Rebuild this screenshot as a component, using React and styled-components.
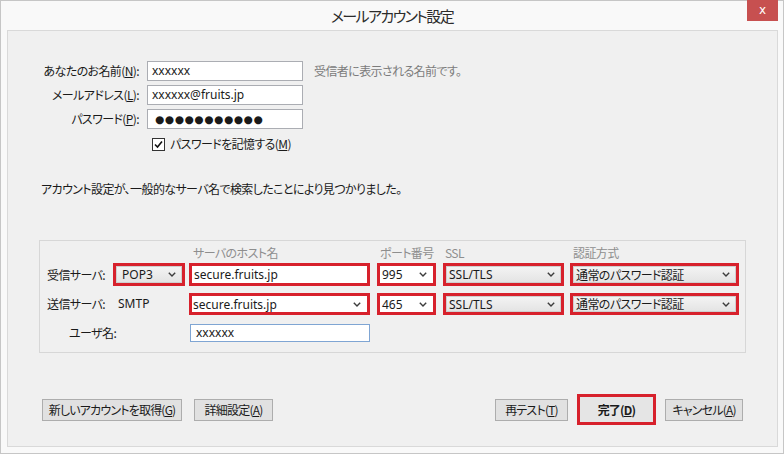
import React from "react";
import styled, { createGlobalStyle } from "styled-components";

const GlobalStyle = createGlobalStyle`
  body {
    margin: 0;
    background: #ffffff;
    font-family: "Noto Sans CJK JP", sans-serif;
    font-size: 12px;
    color: #1a1a1a;
    font-feature-settings: "palt" 1;
    letter-spacing: -0.6px;
  }
`;

const Window = styled.div`
  width: 784px;
  height: 454px;
  box-sizing: border-box;
  border: 1px solid #c6c6c6;
  background: #f9f9f9;
  display: flex;
  flex-direction: column;
`;

const TitleBar = styled.div`
  height: 29px;
  display: grid;
  grid-template-columns: 1fr auto 1fr;
  align-items: start;
`;

const Title = styled.div`
  grid-column: 2;
  font-size: 15px;
  line-height: 30px;
  letter-spacing: -1.6px;
  color: #2b2b2b;
`;

const CloseButton = styled.div`
  justify-self: end;
  margin-right: 5px;
  margin-top: -1px;
  width: 31px;
  height: 21px;
  background: #c75050;
  color: #ffffff;
  font-family: "DejaVu Sans", sans-serif;
  font-size: 12px;
  letter-spacing: 0;
  line-height: 20px;
  text-align: center;
`;

const Content = styled.div`
  flex: 1;
  margin: 0 5px 6px 6px;
  border: 1px solid #d9d9d9;
  background: #f0f0f0;
  display: flex;
  flex-direction: column;
`;

const FormGrid = styled.div`
  margin-top: 30px;
  display: grid;
  grid-template-columns: 131px 156px auto;
  grid-auto-rows: 20px;
  column-gap: 8px;
  row-gap: 4px;
  align-items: center;
`;

const Label = styled.div`
  text-align: right;
  line-height: 16px;
  white-space: nowrap;
`;

const TextInput = styled.div`
  height: 20px;
  box-sizing: border-box;
  border: 1px solid #abadb3;
  background: #ffffff;
  padding: 0 4px;
  font-family: "Noto Sans", "Noto Sans CJK JP", sans-serif;
  font-size: 12px;
  letter-spacing: 0;
  line-height: 18px;
  font-feature-settings: normal;
`;

const Dots = styled.span`
  font-family: "DejaVu Sans", sans-serif;
  font-size: 10.6px;
  letter-spacing: 0.6px;
  padding-left: 3px;
`;

const Hint = styled.div`
  margin-left: 3px;
  color: #7c7c7c;
  line-height: 16px;
  white-space: nowrap;
`;

const CheckRow = styled.div`
  grid-column: 2 / span 2;
  margin-top: 2px;
  padding-left: 5px;
  display: flex;
  align-items: center;
  gap: 5px;
  line-height: 16px;
`;

const CheckBox = styled.span`
  width: 13px;
  height: 13px;
  box-sizing: border-box;
  border: 1px solid #333333;
  background: #ffffff;
  display: flex;
  align-items: center;
  justify-content: center;
`;

const Message = styled.div`
  margin: 28px 0 0 33px;
  line-height: 16px;
`;

const GroupBox = styled.div`
  margin: 43px 0 0 31px;
  width: 707px;
  height: 113px;
  box-sizing: border-box;
  border: 1px solid #d7d7d7;
  padding: 4px 0 0 7px;
`;

const ServerGrid = styled.div`
  display: grid;
  grid-template-columns: 66px 76px 188px 66px 127px 169px;
  grid-template-rows: 18px 30px 31px 18px;
  align-items: start;
`;

const Header = styled.div`
  grid-column: ${(p) => p.$col};
  padding-left: ${(p) => p.$pl || 3}px;
  color: #8e8e8e;
  line-height: 16px;
  white-space: nowrap;
`;

const Cell = styled.div`
  grid-column: ${(p) => p.$col};
  height: ${(p) => p.$h}px;
  line-height: ${(p) => p.$h}px;
  padding-left: ${(p) => p.$pl || 0}px;
  white-space: nowrap;
  font-family: ${(p) => (p.$latin ? '"Noto Sans", "Noto Sans CJK JP", sans-serif' : "inherit")};
  letter-spacing: ${(p) => (p.$latin ? "0" : "inherit")};
`;

const RedBox = styled.div`
  grid-column: ${(p) => p.$col};
  width: ${(p) => p.$w}px;
  height: ${(p) => p.$h}px;
  box-sizing: border-box;
  border: 3px solid #d7212c;
  background: #ffffff;
`;

const Combo = styled.div`
  height: 100%;
  box-sizing: border-box;
  display: flex;
  align-items: center;
  justify-content: space-between;
  padding: 0 5px 0 ${(p) => p.$pl}px;
  border: 1px solid ${(p) => (p.$white ? "transparent" : "#cfcfcf")};
  background: ${(p) => (p.$white ? "#ffffff" : "linear-gradient(#f3f3f3, #e4e4e4)")};
  font-family: "Noto Sans", "Noto Sans CJK JP", sans-serif;
  font-size: 12px;
  letter-spacing: ${(p) => (p.$jp ? "-0.6px" : "0")};
  font-feature-settings: ${(p) => (p.$jp ? '"palt" 1' : "normal")};
`;

const UserInput = styled.div`
  grid-column: 3;
  width: 180px;
  height: 18px;
  margin-left: 1px;
  box-sizing: border-box;
  border: 1px solid #7fa5d3;
  background: #ffffff;
  padding-left: 5px;
  font-family: "Noto Sans", sans-serif;
  font-size: 12px;
  letter-spacing: 0;
  line-height: 15px;
`;

const ButtonRow = styled.div`
  margin: 41px 34px 0 34px;
  display: flex;
  align-items: center;
`;

const ButtonGroup = styled.div`
  display: flex;
  align-items: center;
  gap: ${(p) => p.$gap}px;
  margin-left: ${(p) => (p.$right ? "auto" : 0)};
`;

const Button = styled.div`
  width: ${(p) => p.$w}px;
  height: ${(p) => (p.$primary ? 31 : 22)}px;
  box-sizing: border-box;
  border: ${(p) => (p.$primary ? "3px solid #d7212c" : "1px solid #adadad")};
  background: ${(p) => (p.$primary ? "#e5e5e5" : "#e1e1e1")};
  display: flex;
  align-items: center;
  justify-content: center;
  white-space: nowrap;
  letter-spacing: -0.8px;
  font-weight: ${(p) => (p.$primary ? 700 : 400)};
  line-height: 16px;
`;

const Chevron = () => (
  <svg width="8" height="5" viewBox="0 0 8 5">
    <polyline points="0.8,0.8 4,4 7.2,0.8" fill="none" stroke="#3c3c3c" strokeWidth="1.4" />
  </svg>
);

const Check = () => (
  <svg width="9" height="9" viewBox="0 0 9 9">
    <polyline points="1,4.5 3.5,7 8,1.5" fill="none" stroke="#111" strokeWidth="1.6" />
  </svg>
);

const App = () => (
  <>
    <GlobalStyle />
    <Window>
      <TitleBar>
        <Title>メールアカウント設定</Title>
        <CloseButton>x</CloseButton>
      </TitleBar>
      <Content>
        <FormGrid>
          <Label>あなたのお名前(<u>N</u>):</Label>
          <TextInput>xxxxxx</TextInput>
          <Hint>受信者に表示される名前です。</Hint>
          <Label>メールアドレス(<u>L</u>):</Label>
          <TextInput>xxxxxx@fruits.jp</TextInput>
          <span />
          <Label>パスワード(<u>P</u>):</Label>
          <TextInput>
            <Dots>●●●●●●●●●●●</Dots>
          </TextInput>
          <span />
          <span />
          <CheckRow>
            <CheckBox>
              <Check />
            </CheckBox>
            <span>
              パスワードを記憶する(<u>M</u>)
            </span>
          </CheckRow>
        </FormGrid>

        <Message>アカウント設定が、一般的なサーバ名で検索したことにより見つかりました。</Message>

        <GroupBox>
          <ServerGrid>
            <Header $col={3} $pl={4}>サーバのホスト名</Header>
            <Header $col={4}>ポート番号</Header>
            <Header $col={5} $pl={2}>SSL</Header>
            <Header $col={6}>認証方式</Header>

            <Cell $col={1} $h={23}>受信サーバ:</Cell>
            <RedBox $col={2} $w={72} $h={23}>
              <Combo $pl={5}>
                POP3
                <Chevron />
              </Combo>
            </RedBox>
            <RedBox $col={3} $w={181} $h={23}>
              <Combo $white $pl={1}>secure.fruits.jp</Combo>
            </RedBox>
            <RedBox $col={4} $w={59} $h={23}>
              <Combo $white $pl={1}>
                995
                <Chevron />
              </Combo>
            </RedBox>
            <RedBox $col={5} $w={121} $h={23}>
              <Combo $pl={2}>
                SSL/TLS
                <Chevron />
              </Combo>
            </RedBox>
            <RedBox $col={6} $w={169} $h={23}>
              <Combo $pl={2} $jp>
                通常のパスワード認証
                <Chevron />
              </Combo>
            </RedBox>

            <Cell $col={1} $h={22}>送信サーバ:</Cell>
            <Cell $col={2} $h={22} $pl={5} $latin>SMTP</Cell>
            <RedBox $col={3} $w={181} $h={22}>
              <Combo $white $pl={0}>
                secure.fruits.jp
                <Chevron />
              </Combo>
            </RedBox>
            <RedBox $col={4} $w={59} $h={22}>
              <Combo $white $pl={1}>
                465
                <Chevron />
              </Combo>
            </RedBox>
            <RedBox $col={5} $w={121} $h={22}>
              <Combo $pl={2}>
                SSL/TLS
                <Chevron />
              </Combo>
            </RedBox>
            <RedBox $col={6} $w={169} $h={22}>
              <Combo $pl={2} $jp>
                通常のパスワード認証
                <Chevron />
              </Combo>
            </RedBox>

            <Cell $col={1} $h={18} $pl={22}>ユーザ名:</Cell>
            <UserInput>xxxxxx</UserInput>
          </ServerGrid>
        </GroupBox>

        <ButtonRow>
          <ButtonGroup $gap={12}>
            <Button $w={140}>新しいアカウントを取得(<u>G</u>)</Button>
            <Button $w={79}>詳細設定(<u>A</u>)</Button>
          </ButtonGroup>
          <ButtonGroup $right $gap={9}>
            <Button $w={73}>再テスト(<u>T</u>)</Button>
            <Button $w={79} $primary>
              完了(<u>D</u>)
            </Button>
            <Button $w={78}>キャンセル(<u>A</u>)</Button>
          </ButtonGroup>
        </ButtonRow>
      </Content>
    </Window>
  </>
);

export default App;
